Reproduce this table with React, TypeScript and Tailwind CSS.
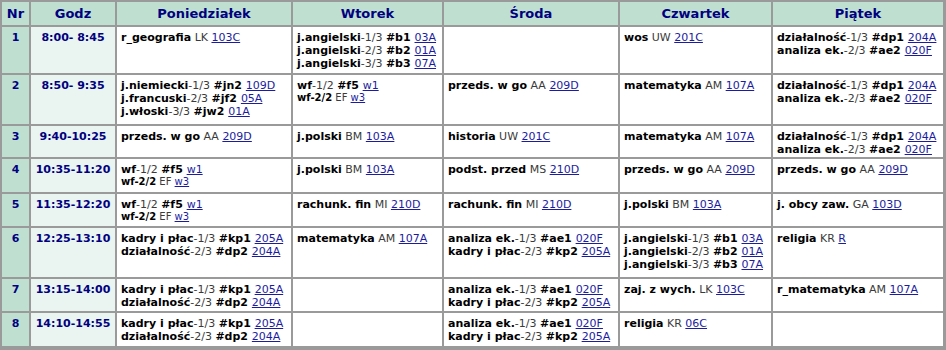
type Entry = { s: string; g?: string; t?: string; n?: string; r: string; small?: boolean };

const ang: Entry[] = [
  { s: 'j.angielski', g: '1/3', t: '#b1', r: '03A' },
  { s: 'j.angielski', g: '2/3', t: '#b2', r: '01A' },
  { s: 'j.angielski', g: '3/3', t: '#b3', r: '07A' },
];
const dzAn: Entry[] = [
  { s: 'działalność', g: '1/3', t: '#dp1', r: '204A' },
  { s: 'analiza ek.', g: '2/3', t: '#ae2', r: '020F' },
];
const wf: Entry[] = [
  { s: 'wf', g: '1/2', t: '#f5', r: 'w1' },
  { s: 'wf-2/2', n: 'EF', r: 'w3', small: true },
];
const kpDz: Entry[] = [
  { s: 'kadry i płac', g: '1/3', t: '#kp1', r: '205A' },
  { s: 'działalność', g: '2/3', t: '#dp2', r: '204A' },
];
const anKp: Entry[] = [
  { s: 'analiza ek.', g: '1/3', t: '#ae1', r: '020F' },
  { s: 'kadry i płac', g: '2/3', t: '#kp2', r: '205A' },
];
const one = (s: string, n: string, r: string): Entry[] => [{ s, n, r }];

const days = ['Poniedziałek', 'Wtorek', 'Środa', 'Czwartek', 'Piątek'];

const rows: { nr: number; time: string; cells: Entry[][] }[] = [
  {
    nr: 1,
    time: '8:00- 8:45',
    cells: [one('r_geografia', 'LK', '103C'), ang, [], one('wos', 'UW', '201C'), dzAn],
  },
  {
    nr: 2,
    time: '8:50- 9:35',
    cells: [
      [
        { s: 'j.niemiecki', g: '1/3', t: '#jn2', r: '109D' },
        { s: 'j.francuski', g: '2/3', t: '#jf2', r: '05A' },
        { s: 'j.włoski', g: '3/3', t: '#jw2', r: '01A' },
      ],
      wf,
      one('przeds. w go', 'AA', '209D'),
      one('matematyka', 'AM', '107A'),
      dzAn,
    ],
  },
  {
    nr: 3,
    time: '9:40-10:25',
    cells: [
      one('przeds. w go', 'AA', '209D'),
      one('j.polski', 'BM', '103A'),
      one('historia', 'UW', '201C'),
      one('matematyka', 'AM', '107A'),
      dzAn,
    ],
  },
  {
    nr: 4,
    time: '10:35-11:20',
    cells: [
      wf,
      one('j.polski', 'BM', '103A'),
      one('podst. przed', 'MS', '210D'),
      one('przeds. w go', 'AA', '209D'),
      one('przeds. w go', 'AA', '209D'),
    ],
  },
  {
    nr: 5,
    time: '11:35-12:20',
    cells: [
      wf,
      one('rachunk. fin', 'MI', '210D'),
      one('rachunk. fin', 'MI', '210D'),
      one('j.polski', 'BM', '103A'),
      one('j. obcy zaw.', 'GA', '103D'),
    ],
  },
  {
    nr: 6,
    time: '12:25-13:10',
    cells: [kpDz, one('matematyka', 'AM', '107A'), anKp, ang, one('religia', 'KR', 'R')],
  },
  {
    nr: 7,
    time: '13:15-14:00',
    cells: [kpDz, [], anKp, one('zaj. z wych.', 'LK', '103C'), one('r_matematyka', 'AM', '107A')],
  },
  {
    nr: 8,
    time: '14:10-14:55',
    cells: [kpDz, [], anKp, one('religia', 'KR', '06C'), []],
  },
];

function Line({ e }: { e: Entry }) {
  return (
    <div className={e.small ? 'text-[10px] leading-[12px]' : 'leading-[13px]'}>
      <b>{e.s}</b>
      {e.g && <span className="text-[#3a3a3a]">-{e.g} </span>}
      {e.t && <b>{e.t} </b>}
      {e.n && <span className="text-[#3a3a3a]"> {e.n} </span>}
      <a href="#" className="text-[#1c1ca0] underline">
        {e.r}
      </a>
    </div>
  );
}

export default function App() {
  return (
    <div
      className="w-[946px] h-[350px] bg-[#9a9a9a] pt-[2px] pl-[2px] pr-[3px] pb-[4px] grid grid-cols-[27px_84px_174px_149px_174px_151px_170px] grid-rows-[23px_46px_49px_31px_33px_32px_49px_32px_33px] gap-[2px] text-[11px] text-black"
      style={{ fontFamily: '"DejaVu Sans", Verdana, sans-serif' }}
    >
      <div className="bg-[#bfe0d1] flex items-center justify-center font-bold text-[13px] text-[#000080]">Nr</div>
      <div className="bg-[#bfe0d1] flex items-center justify-center font-bold text-[13px] text-[#000080]">Godz</div>
      {days.map((d) => (
        <div key={d} className="bg-[#bfe0d1] flex items-center justify-center font-bold text-[13px] text-[#000080]">
          {d}
        </div>
      ))}
      {rows.map((row) => (
        <>
          <div key={`n${row.nr}`} className="bg-[#bfe0d1] pt-[4px] text-center font-bold text-[#000080] leading-[13px]">
            {row.nr}
          </div>
          <div key={`t${row.nr}`} className="bg-[#eaf4f0] pt-[4px] text-center font-bold text-[#000080] leading-[13px] whitespace-pre">
            {row.time}
          </div>
          {row.cells.map((c, i) => (
            <div key={`c${row.nr}-${i}`} className="bg-white pt-[4px] pl-[4px] whitespace-nowrap overflow-hidden">
              {c.map((e, j) => (
                <Line key={j} e={e} />
              ))}
            </div>
          ))}
        </>
      ))}
    </div>
  );
}
